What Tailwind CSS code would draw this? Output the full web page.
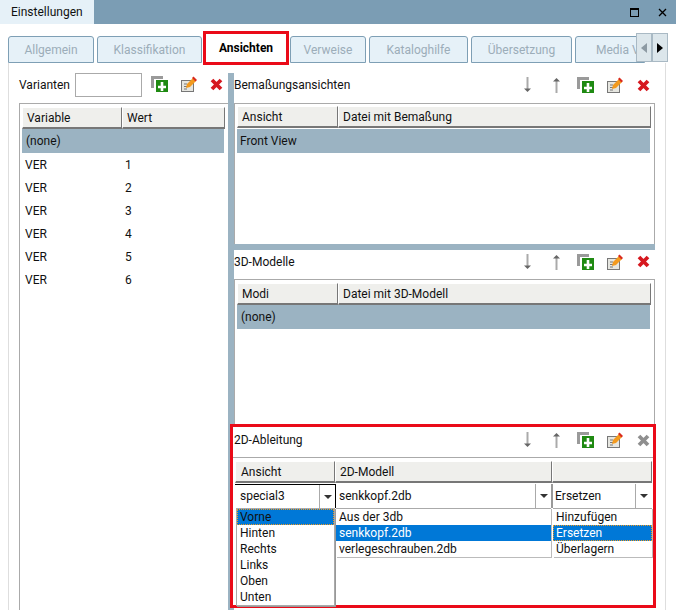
<!DOCTYPE html>
<html lang="de">
<head>
<meta charset="UTF-8">
<title>Einstellungen</title>
<script src="https://cdn.jsdelivr.net/npm/@tailwindcss/browser@4"></script>
</head>
<body class="bg-white">
<svg width="0" height="0" class="absolute">
  <defs>
    <symbol id="i-add" viewBox="0 0 17 16">
      <path d="M0 0h12v3H3v9H0z" fill="#9a9a9a"/>
      <rect x="5" y="4" width="12" height="12" fill="#1f8a12"/>
      <path d="M9.700 6h2.600v3.700H15v2.600h-2.700V15H9.700v-2.700H7V9.700h2.700z" fill="#fff"/>
    </symbol>
    <symbol id="i-edit" viewBox="0 0 16 16">
      <rect x="0.500" y="4.500" width="12" height="11" fill="#e6e6e0" stroke="#777"/>
      <path d="M3 8h3M3 10.500h4M3 13h3" stroke="#777"/>
      <path d="M5 12l1-4 6-6 3 3-6 6z" fill="#f39a1e"/>
      <path d="M12.500 0.500L16 4l-1.500 1.500-3.500-3.500z" fill="#d9291c"/>
    </symbol>
    <symbol id="i-del" viewBox="0 0 13 13">
      <path d="M2 2l9 9M11 2l-9 9" stroke="currentColor" stroke-width="3.800" fill="none"/>
    </symbol>
    <symbol id="i-down" viewBox="0 0 9 16">
      <path d="M4.500 0v12" stroke="#aaa" stroke-width="2"/>
      <path d="M1 11.500h7L4.500 15z" fill="#666"/>
    </symbol>
    <symbol id="i-up" viewBox="0 0 9 16">
      <path d="M4.500 4v12" stroke="#aaa" stroke-width="2"/>
      <path d="M1 4.500h7L4.500 1z" fill="#666"/>
    </symbol>
  </defs>
</svg>

<div class="w-[676px] h-[610px] overflow-hidden flex flex-col bg-white text-[12px] text-[#111] font-['Roboto',sans-serif]">

  <!-- title bar -->
  <div class="h-[24px] shrink-0 flex items-stretch bg-[#7b9db4]">
    <div class="w-[94px] bg-[#e6f1f8] pl-[11px] leading-[25px]">Einstellungen</div>
    <div class="ml-auto flex items-center gap-[19px] pr-[9px]">
      <div class="w-[9px] h-[9px] border border-black border-t-2"></div>
      <svg width="9" height="9" viewBox="0 0 9 9"><path d="M1 1l7 7M8 1l-7 7" stroke="#000" stroke-width="1.300"/></svg>
    </div>
  </div>

  <!-- tab strip -->
  <div class="relative h-[39px] shrink-0 flex items-end pl-[8px] gap-[3px] text-[#9cadb9]">
    <div class="w-[86px] h-[27px] bg-[#e6f1f8] border border-[#7e9fb5] rounded-t-[3px] flex items-center justify-center">Allgemein</div>
    <div class="w-[105px] h-[27px] bg-[#e6f1f8] border border-[#7e9fb5] rounded-t-[3px] flex items-center justify-center">Klassifikation</div>
    <div class="w-[86px] h-[34px] -mb-[2px] -mx-[2px] bg-white border-[3px] border-[#ea0a18] flex items-center justify-center font-bold text-black relative z-10">Ansichten</div>
    <div class="w-[76px] h-[27px] bg-[#e6f1f8] border border-[#7e9fb5] rounded-t-[3px] flex items-center justify-center">Verweise</div>
    <div class="w-[99px] h-[27px] bg-[#e6f1f8] border border-[#7e9fb5] rounded-t-[3px] flex items-center justify-center">Kataloghilfe</div>
    <div class="w-[101px] h-[27px] bg-[#e6f1f8] border border-[#7e9fb5] rounded-t-[3px] flex items-center justify-center">Übersetzung</div>
    <div class="w-[70px] h-[27px] bg-[#e6f1f8] border border-[#7e9fb5] rounded-t-[3px] pl-[20px] flex items-center whitespace-nowrap">Media V</div>
    <div class="absolute left-[636px] top-[9px] h-[29px] flex">
      <div class="w-[16px] bg-[#dce6eb] border border-[#a9b9c4] flex items-center justify-center">
        <svg width="6" height="10" viewBox="0 0 6 10"><path d="M6 0v10L0 5z" fill="#8d9aa3"/></svg>
      </div>
      <div class="w-[16px] bg-[#dce6eb] border border-[#a9b9c4] flex items-center justify-center">
        <svg width="6" height="10" viewBox="0 0 6 10"><path d="M0 0v10l6-5z" fill="#000"/></svg>
      </div>
    </div>
  </div>

  <!-- page -->
  <div class="flex-1 min-h-0 ml-[8px] w-[658px] border-l border-r border-[#dedede] flex">

    <!-- left: Varianten -->
    <div class="w-[219px] shrink-0 pl-[10px] pt-[10px] flex flex-col">
      <div class="h-[24px] flex items-center">
        <span class="w-[56px]">Varianten</span>
        <div class="w-[67px] h-[24px] border border-[#aaa] bg-white"></div>
        <svg class="ml-[9px] -mt-[2px]" width="17" height="16"><use href="#i-add"/></svg>
        <svg class="ml-[13px] -mt-[2px]" width="16" height="16"><use href="#i-edit"/></svg>
        <svg class="ml-[13px] -mt-[2px] text-[#d6181f]" width="13" height="13"><use href="#i-del"/></svg>
      </div>
      <div class="mt-[6px] flex-1 w-[210px] border border-b-0 border-[#aaa] pl-[2px] pt-[3px]">
        <div class="flex h-[22px] w-[203px]">
          <div class="w-[100px] bg-[#efefec] border border-white border-r-[#777] border-b-[#777] border-b-2 pl-[4px] leading-[21px]">Variable</div>
          <div class="flex-1 bg-[#efefec] border border-white border-r-[#777] border-b-[#777] border-b-2 pl-[4px] leading-[21px]">Wert</div>
        </div>
        <div class="h-[24px] w-[202px] bg-[#9bb3c2] pl-[4px] leading-[24px]">(none)</div>
        <div>
          <div class="flex h-[23px] items-center pl-[3px]"><span class="w-[100px]">VER</span><span>1</span></div>
          <div class="flex h-[23px] items-center pl-[3px]"><span class="w-[100px]">VER</span><span>2</span></div>
          <div class="flex h-[23px] items-center pl-[3px]"><span class="w-[100px]">VER</span><span>3</span></div>
          <div class="flex h-[23px] items-center pl-[3px]"><span class="w-[100px]">VER</span><span>4</span></div>
          <div class="flex h-[23px] items-center pl-[3px]"><span class="w-[100px]">VER</span><span>5</span></div>
          <div class="flex h-[23px] items-center pl-[3px]"><span class="w-[100px]">VER</span><span>6</span></div>
        </div>
      </div>
    </div>

    <!-- vertical splitter -->
    <div class="w-[6px] shrink-0 mt-[10px] bg-[#9bb3c2]"></div>

    <!-- right column -->
    <div class="w-[421px] shrink-0 flex flex-col pt-[10px]">

      <!-- Bemaßungsansichten -->
      <div class="h-[171px] shrink-0 flex flex-col">
        <div class="h-[30px] shrink-0 flex items-center pb-[6px]">
          <span>Bemaßungsansichten</span>
          <div class="ml-auto flex items-center pr-[5px]">
            <svg width="9" height="16"><use href="#i-down"/></svg>
            <svg class="ml-[20px]" width="9" height="16"><use href="#i-up"/></svg>
            <svg class="ml-[16px]" width="17" height="16"><use href="#i-add"/></svg>
            <svg class="ml-[13px]" width="16" height="16"><use href="#i-edit"/></svg>
            <svg class="ml-[14px] text-[#d6181f]" width="13" height="13"><use href="#i-del"/></svg>
          </div>
        </div>
        <div class="flex-1 border border-b-0 border-[#aaa] pl-[2px] pt-[2px]">
          <div class="flex h-[22px] w-[414px]">
            <div class="w-[101px] bg-[#efefec] border border-white border-r-[#777] border-b-[#777] border-b-2 pl-[4px] leading-[21px]">Ansicht</div>
            <div class="flex-1 bg-[#efefec] border border-white border-r-[#777] border-b-[#777] border-b-2 pl-[4px] leading-[21px]">Datei mit Bemaßung</div>
          </div>
          <div class="h-[24px] w-[413px] mt-[1px] bg-[#9bb3c2] pl-[3px] leading-[24px]">Front View</div>
        </div>
      </div>

      <!-- horizontal splitter -->
      <div class="h-[6px] shrink-0 bg-[#9bb3c2]"></div>

      <!-- 3D-Modelle -->
      <div class="h-[174px] shrink-0 flex flex-col">
        <div class="h-[29px] shrink-0 flex items-center pb-[6px]">
          <span>3D-Modelle</span>
          <div class="ml-auto flex items-center pr-[5px]">
            <svg width="9" height="16"><use href="#i-down"/></svg>
            <svg class="ml-[20px]" width="9" height="16"><use href="#i-up"/></svg>
            <svg class="ml-[16px]" width="17" height="16"><use href="#i-add"/></svg>
            <svg class="ml-[13px]" width="16" height="16"><use href="#i-edit"/></svg>
            <svg class="ml-[14px] text-[#d6181f]" width="13" height="13"><use href="#i-del"/></svg>
          </div>
        </div>
        <div class="flex-1 border border-b-0 border-[#aaa] pl-[2px] pt-[3px]">
          <div class="flex h-[22px] w-[414px]">
            <div class="w-[101px] bg-[#efefec] border border-white border-r-[#777] border-b-[#777] border-b-2 pl-[4px] leading-[21px]">Modi</div>
            <div class="flex-1 bg-[#efefec] border border-white border-r-[#777] border-b-[#777] border-b-2 pl-[4px] leading-[21px]">Datei mit 3D-Modell</div>
          </div>
          <div class="h-[24px] w-[413px] bg-[#9bb3c2] pl-[4px] leading-[24px]">(none)</div>
        </div>
      </div>

      <!-- 2D-Ableitung (highlighted) -->
      <div class="relative z-10 -ml-[4px] w-[426px] h-[184px] shrink-0 bg-white border-[3px] border-[#ea0a18] flex flex-col">
        <div class="h-[30px] shrink-0 flex items-center pl-[1px] pb-[4px]">
          <span>2D-Ableitung</span>
          <div class="ml-auto flex items-center pr-[3px]">
            <svg width="9" height="16"><use href="#i-down"/></svg>
            <svg class="ml-[20px]" width="9" height="16"><use href="#i-up"/></svg>
            <svg class="ml-[16px]" width="17" height="16"><use href="#i-add"/></svg>
            <svg class="ml-[13px]" width="16" height="16"><use href="#i-edit"/></svg>
            <svg class="ml-[14px] text-[#8f8f8f]" width="13" height="13"><use href="#i-del"/></svg>
          </div>
        </div>
        <div class="flex-1 border-t border-[#aaa] pl-[2px] pt-[3px]">
          <div class="flex h-[22px] w-[417px]">
            <div class="w-[100px] bg-[#efefec] border border-white border-r-[#777] border-b-[#777] border-b-2 pl-[5px] leading-[21px]">Ansicht</div>
            <div class="w-[217px] bg-[#efefec] border border-white border-r-[#777] border-b-[#777] border-b-2 pl-[4px] leading-[21px]">2D-Modell</div>
            <div class="flex-1 bg-[#efefec] border border-white border-r-[#777] border-b-[#777] border-b-2"></div>
          </div>
          <!-- combo row -->
          <div class="flex h-[24px] w-[417px] mt-[1px]">
            <div class="w-[101px] flex border-t border-r border-black border-b-0">
              <span class="flex-1 pl-[5px] leading-[22px]">special3</span>
              <div class="w-[16px] border-l border-[#aaa] flex items-center justify-center">
                <svg width="8" height="4" viewBox="0 0 8 4"><path d="M0 0h8L4 4z" fill="#333"/></svg>
              </div>
            </div>
            <div class="w-[217px] flex border-r-2 border-[#999]">
              <span class="flex-1 pl-[3px] leading-[24px]">senkkopf.2db</span>
              <div class="w-[16px] border-l border-[#aaa] flex items-center justify-center">
                <svg width="8" height="4" viewBox="0 0 8 4"><path d="M0 0h8L4 4z" fill="#333"/></svg>
              </div>
            </div>
            <div class="flex-1 flex">
              <span class="flex-1 pl-[2px] leading-[24px]">Ersetzen</span>
              <div class="w-[17px] border-l border-[#aaa] flex items-center justify-center">
                <svg width="8" height="4" viewBox="0 0 8 4"><path d="M0 0h8L4 4z" fill="#333"/></svg>
              </div>
            </div>
          </div>
        </div>

        <!-- open dropdowns -->
        <div class="absolute z-10 left-[103px] top-[81px] w-[215px] bg-white border-t border-[#aaa] shadow-[1px_1px_0_#bbb] leading-[16px]">
          <div class="h-[16px] pl-[3px]">Aus der 3db</div>
          <div class="h-[16px] pl-[3px] bg-[#0078d7] text-white">senkkopf.2db</div>
          <div class="h-[16px] pl-[3px]">verlegeschrauben.2db</div>
        </div>
        <div class="absolute z-10 left-[320px] top-[81px] w-[99px] bg-white border-t border-[#aaa] shadow-[1px_1px_0_#bbb] leading-[16px]">
          <div class="h-[16px] pl-[3px]">Hinzufügen</div>
          <div class="h-[16px] pl-[3px] bg-[#0078d7] text-white outline-1 outline-dotted -outline-offset-1 outline-[#f39a1e]">Ersetzen</div>
          <div class="h-[16px] pl-[3px]">Überlagern</div>
        </div>
        <div class="absolute z-20 left-[3px] top-[81px] w-[99px] bg-white border border-[#aaa] shadow-[1px_1px_0_#999] leading-[16px]">
          <div class="h-[16px] pl-[3px] bg-[#0078d7] text-[#111] outline-1 outline-dotted -outline-offset-1 outline-[#f39a1e]">Vorne</div>
          <div class="h-[16px] pl-[3px]">Hinten</div>
          <div class="h-[16px] pl-[3px]">Rechts</div>
          <div class="h-[16px] pl-[3px]">Links</div>
          <div class="h-[16px] pl-[3px]">Oben</div>
          <div class="h-[16px] pl-[3px]">Unten</div>
        </div>
      </div>
    </div>
  </div>
</div>
</body>
</html>
